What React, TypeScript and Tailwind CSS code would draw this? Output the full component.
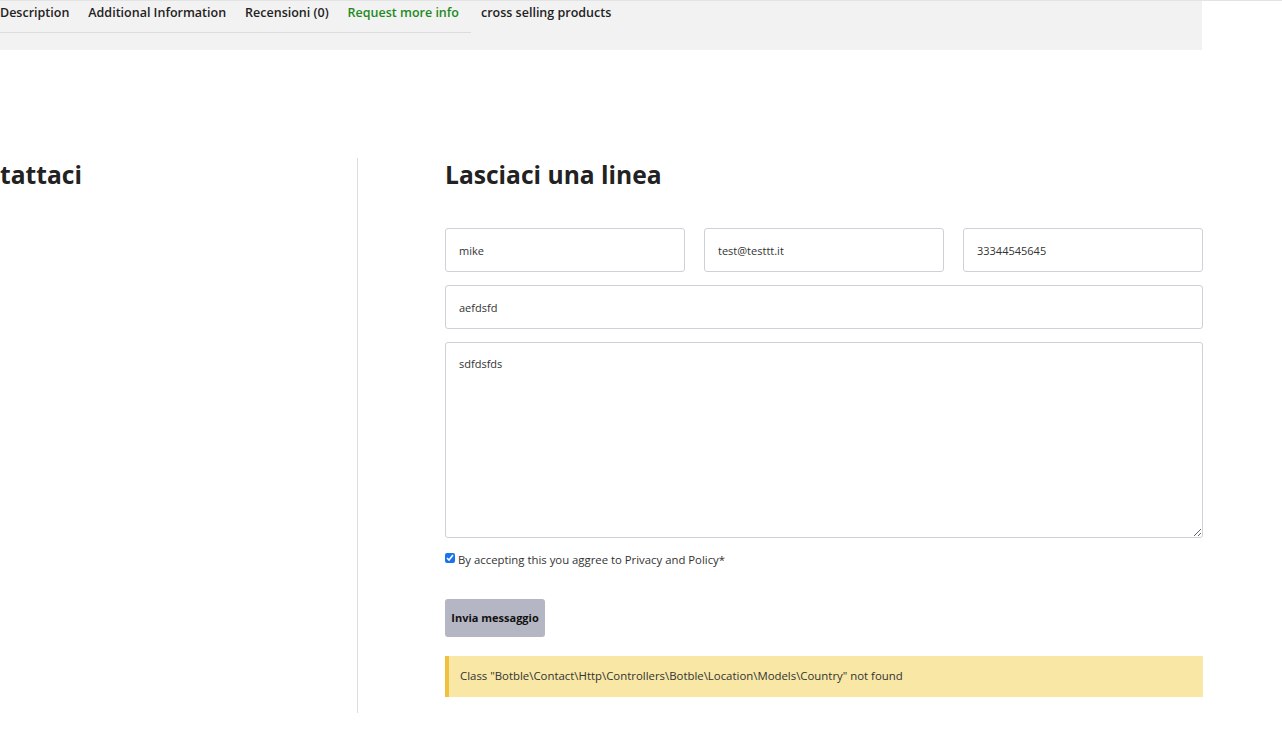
import React from "react";

export default function App() {
  const font = { fontFamily: "'Open Sans', 'Noto Sans', sans-serif" };
  return (
    <div className="w-[1282px] h-[745px] bg-white overflow-hidden text-[#222]" style={font}>
      <div className="border-t border-[#e3e3e3]">
        <div className="w-[1202px] h-[49px] bg-[#f2f2f2] flex items-start">
          <ul className="flex gap-[19px] pr-[12px] border-b border-[#dcdcdc] h-[32px] items-start pt-[3px] text-[12.5px] leading-[17px] font-semibold">
            <li>Description</li>
            <li>Additional Information</li>
            <li>Recensioni (0)</li>
            <li className="text-[#1e8a1e]">Request more info</li>
          </ul>
          <div className="ml-[10px] pt-[3px] text-[12.5px] leading-[17px] font-semibold">cross selling products</div>
        </div>
      </div>

      <div className="flex mt-[108px]">
        <div className="w-[358px] h-[555px] border-r border-[#dddddd] pt-[2px]">
          <h2 className="text-[24.6px] font-bold leading-[30px]">tattaci</h2>
        </div>
        <div className="pl-[87px] w-[845px] pt-[2px]">
          <h2 className="text-[24.6px] font-bold leading-[30px]">Lasciaci una linea</h2>
          <form className="mt-[38px] flex flex-col">
            <div className="grid grid-cols-3 gap-[19px]">
              <input readOnly value="mike" className="h-[44px] border border-[#cdd2d8] rounded-[3px] px-[13px] text-[11px] text-[#333] outline-none" />
              <input readOnly value="test@testtt.it" className="h-[44px] border border-[#cdd2d8] rounded-[3px] px-[13px] text-[11px] text-[#333] outline-none" />
              <input readOnly value="33344545645" className="h-[44px] border border-[#cdd2d8] rounded-[3px] px-[13px] text-[11px] text-[#333] outline-none" />
            </div>
            <input readOnly value="aefdsfd" className="mt-[13px] h-[44px] border border-[#cdd2d8] rounded-[3px] px-[13px] text-[11px] text-[#333] outline-none" />
            <textarea readOnly value="sdfdsfds" className="mt-[13px] h-[196px] border border-[#cdd2d8] rounded-[3px] px-[13px] pt-[13px] text-[11px] text-[#333] outline-none" />
            <label className="mt-[15px] flex items-center gap-[3px] text-[11.35px] text-[#333] h-[13px]">
              <input type="checkbox" defaultChecked className="w-[10px] h-[10px] m-0 -mt-[4px] accent-[#1a73e8]" />
              <span>By accepting this you aggree to Privacy and Policy*</span>
            </label>
            <button type="button" className="mt-[33px] w-[100px] h-[38px] rounded-[3px] bg-[#b5b6c3] text-[11px] font-bold text-[#111]">Invia messaggio</button>
            <div className="mt-[19px] h-[41px] bg-[#f8e7a5] border-l-4 border-[#f0c03e] flex items-center pl-[11px] pb-[2px] text-[11.4px] text-[#333]">
              Class "Botble\Contact\Http\Controllers\Botble\Location\Models\Country" not found
            </div>
          </form>
        </div>
      </div>
    </div>
  );
}
